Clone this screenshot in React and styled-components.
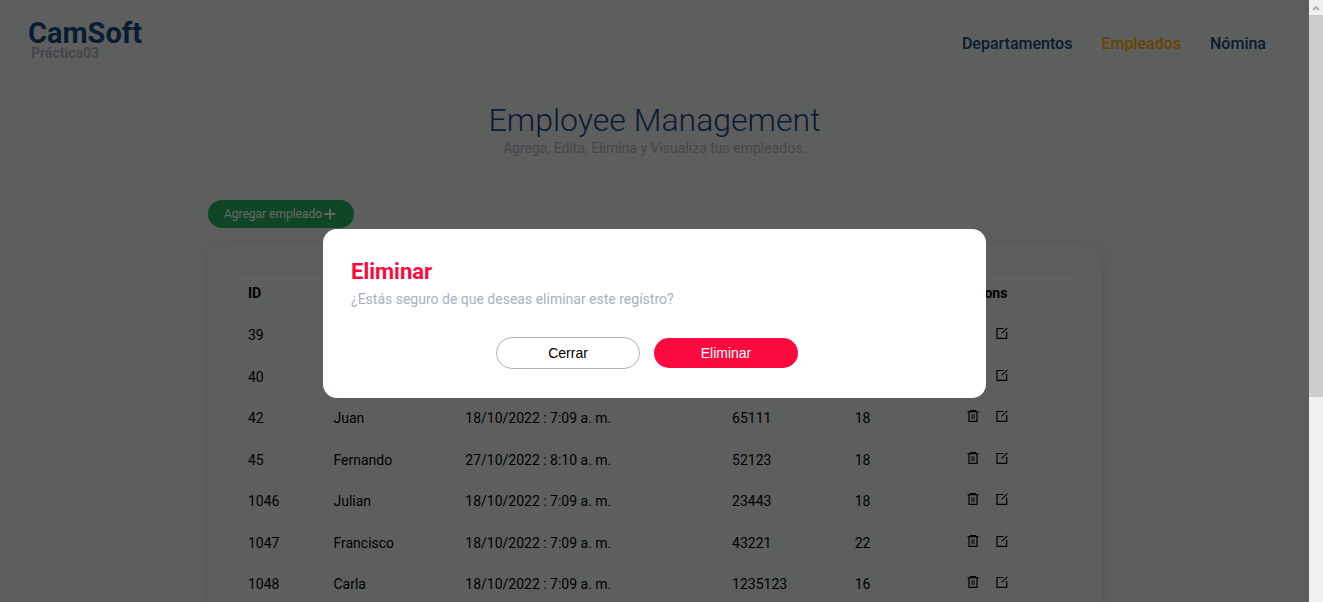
import React from "react";
import styled, { createGlobalStyle } from "styled-components";

const GlobalStyle = createGlobalStyle`
  *, *::before, *::after { box-sizing: border-box; }
  body {
    margin: 0;
    font-family: Roboto, sans-serif;
    font-size: 14px;
    background: #e9edeb;
    color: #000;
    overflow: hidden;
  }
  h1, h2, p { margin: 0; }
`;

const Shell = styled.div`
  display: flex;
  height: 100vh;
  overflow: hidden;
`;

const Viewport = styled.div`
  flex: 1;
  min-width: 0;
  position: relative;
  overflow: hidden;
`;

const Header = styled.header`
  display: flex;
  justify-content: space-between;
  align-items: center;
  padding: 19px 43px 0 28px;
`;

const Brand = styled.div`
  display: flex;
  flex-direction: column;
`;

const BrandName = styled.span`
  font-size: 29px;
  line-height: 28px;
  font-weight: 700;
  color: #14467f;
`;

const BrandNote = styled.span`
  padding-left: 3px;
  font-size: 14px;
  line-height: 12px;
  font-weight: 700;
  color: #a9b0bb;
`;

const Nav = styled.nav`
  display: flex;
  gap: 29px;
  padding-top: 9px;
`;

const NavLink = styled.a`
  font-size: 16px;
  line-height: 20px;
  font-weight: 500;
  text-decoration: none;
  color: ${(p) => (p.$active ? "#ffa500" : "#14467f")};
`;

const Main = styled.main`
  width: 893px;
  max-width: 100%;
  margin: 0 auto;
`;

const Intro = styled.section`
  padding-top: 41px;
  text-align: center;
`;

const PageTitle = styled.h1`
  font-size: 32px;
  line-height: 40px;
  font-weight: 300;
  color: #14467f;
`;

const PageNote = styled.p`
  font-size: 14px;
  line-height: 16px;
  color: #a9b0bb;
`;

const AddButton = styled.button`
  display: flex;
  align-items: center;
  justify-content: center;
  gap: 2px;
  width: 146px;
  height: 28px;
  margin-top: 44px;
  padding: 0 2px 0 0;
  border: 0;
  border-radius: 14px;
  background: #27ae60;
  color: #fff;
  font-family: inherit;
  font-size: 12px;
`;

const Card = styled.section`
  margin-top: 16px;
  padding: 29px 29px 30px;
  border-radius: 14px;
  box-shadow: 0 4px 18px rgba(0, 0, 0, 0.1);
`;

const Table = styled.table`
  width: 100%;
  table-layout: fixed;
  border-collapse: separate;
  border-spacing: 1px 0;
`;

const Col = styled.col`
  width: ${(p) => p.$w};
`;

const HeadCell = styled.th`
  height: 42px;
  padding: 0 10px 2px;
  border-top: 1px solid #dcdfdf;
  border-bottom: 1px solid #dcdfdf;
  text-align: left;
  font-weight: 700;
`;

const Row = styled.tr`
  height: 42px;
  &:nth-child(even) { height: 41px; }
`;

const Cell = styled.td`
  padding: 0 10px 1px;
  border-bottom: 1px solid #dcdfdf;
  font-size: 14px;
  white-space: nowrap;
`;

const Actions = styled.div`
  display: flex;
  gap: 17px;
  padding: 0 0 4px 8px;
`;

const IconButton = styled.button`
  display: block;
  width: 12px;
  height: 12px;
  padding: 0;
  border: 0;
  background: none;
  color: inherit;
  svg { display: block; }
`;

const Overlay = styled.div`
  position: absolute;
  inset: 0;
  display: flex;
  justify-content: center;
  align-items: flex-start;
  padding-top: 229px;
  background: rgba(0, 0, 0, 0.6);
`;

const Dialog = styled.div`
  width: 663px;
  max-width: 100%;
  padding: 28px 28px 29px;
  border-radius: 14px;
  background: #fff;
`;

const DialogTitle = styled.h2`
  font-size: 22px;
  line-height: 30px;
  font-weight: 700;
  color: #fb0a3f;
`;

const DialogText = styled.p`
  margin-top: 2px;
  font-size: 14px;
  line-height: 20px;
  color: #a9b1c0;
`;

const DialogActions = styled.div`
  display: flex;
  justify-content: center;
  align-items: center;
  gap: 14px;
  margin-top: 28px;
  padding-right: 15px;
`;

const PillButton = styled.button`
  width: 144px;
  height: ${(p) => (p.$danger ? "30px" : "32px")};
  padding: 0;
  border: ${(p) => (p.$danger ? "0" : "1px solid #a9b1c0")};
  border-radius: 16px;
  background: ${(p) => (p.$danger ? "#fb0a3f" : "#fff")};
  color: ${(p) => (p.$danger ? "#fff" : "#000")};
  font-family: "Liberation Sans", Arial, sans-serif;
  font-size: 14px;
`;

const ScrollBar = styled.div`
  display: flex;
  flex-direction: column;
  width: 14px;
  background: #f0f0f0;
`;

const ScrollArrow = styled.div`
  display: flex;
  align-items: center;
  justify-content: center;
  height: 15px;
`;

const ScrollThumb = styled.div`
  height: 65%;
  max-height: 382px;
  background: #cdcdcd;
`;

const PlusIcon = () => (
  <svg width="12" height="12" viewBox="0 0 12 12" aria-hidden="true">
    <path d="M6 .5v11M.5 6h11" stroke="currentColor" strokeWidth="1.8" />
  </svg>
);

const TrashIcon = () => (
  <svg width="12" height="12" viewBox="0 0 12 12" fill="none" stroke="currentColor" aria-hidden="true">
    <path d="M3 .5h6" />
    <path d="M.5 1.7h11" strokeWidth="1.2" />
    <path d="M2 2v9.3h8V2" strokeWidth="1.2" />
    <path d="M5 4.2v5M7 4.2v5" />
  </svg>
);

const EditIcon = () => (
  <svg width="12" height="12" viewBox="0 0 12 12" fill="none" stroke="currentColor" aria-hidden="true">
    <path d="M7.5 1.5H1v9.8h9.7V5" strokeWidth="1.2" />
    <path d="M5.6 6.4L11.4.8" strokeWidth="1.1" />
  </svg>
);

const columns = ["10.2%", "15.8%", "32.1%", "14.7%", "12.5%", "14.7%"];
const headings = ["ID", "", "", "", "", "Actions"];
const employees = [
  ["39", "", "", "", ""],
  ["40", "", "", "", ""],
  ["42", "Juan", "18/10/2022 : 7:09 a. m.", "65111", "18"],
  ["45", "Fernando", "27/10/2022 : 8:10 a. m.", "52123", "18"],
  ["1046", "Julian", "18/10/2022 : 7:09 a. m.", "23443", "18"],
  ["1047", "Francisco", "18/10/2022 : 7:09 a. m.", "43221", "22"],
  ["1048", "Carla", "18/10/2022 : 7:09 a. m.", "1235123", "16"],
];

export default function App() {
  return (
    <>
      <GlobalStyle />
      <Shell>
        <Viewport>
          <Header>
            <Brand>
              <BrandName>CamSoft</BrandName>
              <BrandNote>Práctica03</BrandNote>
            </Brand>
            <Nav>
              <NavLink href="#departamentos">Departamentos</NavLink>
              <NavLink href="#empleados" $active>Empleados</NavLink>
              <NavLink href="#nomina">Nómina</NavLink>
            </Nav>
          </Header>
          <Main>
            <Intro>
              <PageTitle>Employee Management</PageTitle>
              <PageNote>Agrega, Edita, Elimina y Visualiza tus empleados.</PageNote>
            </Intro>
            <AddButton type="button">Agregar empleado<PlusIcon /></AddButton>
            <Card>
              <Table>
                <colgroup>
                  {columns.map((w, i) => <Col key={i} $w={w} />)}
                </colgroup>
                <thead>
                  <tr>{headings.map((h, i) => <HeadCell key={i} scope="col">{h}</HeadCell>)}</tr>
                </thead>
                <tbody>
                  {employees.map((row) => (
                    <Row key={row[0]}>
                      {row.map((value, i) => <Cell key={i}>{value}</Cell>)}
                      <Cell>
                        <Actions>
                          <IconButton type="button" aria-label="Eliminar"><TrashIcon /></IconButton>
                          <IconButton type="button" aria-label="Editar"><EditIcon /></IconButton>
                        </Actions>
                      </Cell>
                    </Row>
                  ))}
                </tbody>
              </Table>
            </Card>
          </Main>
          <Overlay>
            <Dialog role="dialog" aria-modal="true" aria-labelledby="dialog-title">
              <DialogTitle id="dialog-title">Eliminar</DialogTitle>
              <DialogText>¿Estás seguro de que deseas eliminar este regístro?</DialogText>
              <DialogActions>
                <PillButton type="button">Cerrar</PillButton>
                <PillButton type="button" $danger>Eliminar</PillButton>
              </DialogActions>
            </Dialog>
          </Overlay>
        </Viewport>
        <ScrollBar aria-hidden="true">
          <ScrollArrow>
            <svg width="8" height="6" viewBox="0 0 8 6" fill="none">
              <path d="M1 5l3-3 3 3" stroke="#b0b0b0" strokeWidth="2" />
            </svg>
          </ScrollArrow>
          <ScrollThumb />
        </ScrollBar>
      </Shell>
    </>
  );
}
